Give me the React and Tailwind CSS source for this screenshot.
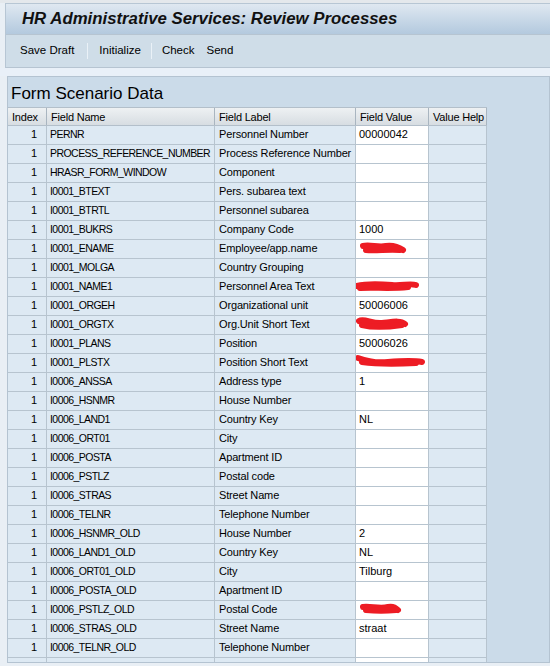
import React from "react";

const rows = [
  ["PERNR", "Personnel Number", "00000042"],
  ["PROCESS_REFERENCE_NUMBER", "Process Reference Number", ""],
  ["HRASR_FORM_WINDOW", "Component", ""],
  ["I0001_BTEXT", "Pers. subarea text", ""],
  ["I0001_BTRTL", "Personnel subarea", ""],
  ["I0001_BUKRS", "Company Code", "1000"],
  ["I0001_ENAME", "Employee/app.name", "", "a"],
  ["I0001_MOLGA", "Country Grouping", ""],
  ["I0001_NAME1", "Personnel Area Text", "", "b"],
  ["I0001_ORGEH", "Organizational unit", "50006006"],
  ["I0001_ORGTX", "Org.Unit Short Text", "", "c"],
  ["I0001_PLANS", "Position", "50006026"],
  ["I0001_PLSTX", "Position Short Text", "", "d"],
  ["I0006_ANSSA", "Address type", "1"],
  ["I0006_HSNMR", "House Number", ""],
  ["I0006_LAND1", "Country Key", "NL"],
  ["I0006_ORT01", "City", ""],
  ["I0006_POSTA", "Apartment ID", ""],
  ["I0006_PSTLZ", "Postal code", ""],
  ["I0006_STRAS", "Street Name", ""],
  ["I0006_TELNR", "Telephone Number", ""],
  ["I0006_HSNMR_OLD", "House Number", "2"],
  ["I0006_LAND1_OLD", "Country Key", "NL"],
  ["I0006_ORT01_OLD", "City", "Tilburg"],
  ["I0006_POSTA_OLD", "Apartment ID", ""],
  ["I0006_PSTLZ_OLD", "Postal Code", "", "e"],
  ["I0006_STRAS_OLD", "Street Name", "straat"],
  ["I0006_TELNR_OLD", "Telephone Number", ""],
  ["", "", ""],
];

// red marker scribbles hiding personal data
const scribbles = {
  a: ["M7 6 C14 4 22 8 30 6 C38 5 44 8 47 10", "M10 10 C20 11 32 9 44 10"],
  b: ["M1 8 C12 5 24 6 36 7 C46 8 54 5 60 7", "M4 10 C18 9 34 11 52 9"],
  c: ["M3 5 C8 2 16 8 26 7 C36 6 44 4 49 8", "M6 9 C18 12 32 11 46 9"],
  d: ["M2 4 C10 7 22 9 32 8 C44 7 56 6 66 8", "M6 8 C20 10 40 10 60 9"],
  e: ["M7 6 C14 5 24 8 32 6 C36 5 40 7 42 9", "M10 9 C20 10 30 10 40 9"],
};

function Scribble({ id }) {
  return (
    <svg className="absolute left-0 top-0" width="72" height="18" viewBox="0 0 72 18">
      {scribbles[id].map((d, i) => (
        <path key={i} d={d} fill="none" stroke="#ed1c24" strokeWidth="6" strokeLinecap="round" strokeLinejoin="round" />
      ))}
    </svg>
  );
}

const cols = "grid grid-cols-[39px_168px_141px_73px_58px] w-[479px]";

export default function App() {
  return (
    <div
      className="w-[550px] h-[666px] overflow-hidden bg-[#e9eff5] text-black"
      style={{ fontFamily: '"Liberation Sans", Arial, sans-serif' }}
    >
      <div className="h-[3px] bg-[#e4e8ec]" />
      <div className="ml-[5px] border-l border-t border-[#b7c6d4]">
        <div className="h-[30px] bg-gradient-to-b from-[#dfe8f1] to-[#b3c9de] pl-[16px] flex items-center">
          <span className="text-[16.8px] font-bold italic text-[#111]">
            HR Administrative Services: Review Processes
          </span>
        </div>
        <div className="h-[34px] bg-[#cfdde8] border-t border-b border-[#b6c4d1] flex items-center pl-[14px] text-[11.5px]">
          <span>Save Draft</span>
          <span className="ml-[13px] mr-[11px] w-px h-[16px] bg-[#aebdcb] border-r border-[#eaf1f7]" />
          <span>Initialize</span>
          <span className="ml-[10px] mr-[10px] w-px h-[16px] bg-[#aebdcb] border-r border-[#eaf1f7]" />
          <span>Check</span>
          <span className="ml-[12px]">Send</span>
        </div>
      </div>
      <div className="h-[8px] bg-[#e9f0f8]" />
      <div className="ml-[7px] h-[587px] border border-[#b4c3d1] bg-[#cbdbe9] overflow-hidden">
        <div className="h-[30px] flex items-center pl-[3px] pt-[3px] text-[17px]">Form Scenario Data</div>
        <div className={`${cols} h-[19px] border-t border-b border-[#b3bfca] bg-gradient-to-b from-[#eef1f3] to-[#d7dde2] text-[11px] tracking-[-0.2px]`}>
          {["Index", "Field Name", "Field Label", "Field Value", "Value Help"].map((h) => (
            <div key={h} className="border-r border-[#a9b5c0] pl-[4px] leading-[18px] whitespace-nowrap overflow-hidden">
              {h}
            </div>
          ))}
        </div>
        {rows.map(([name, label, value, red], i) => (
          <div key={i} className={`${cols} h-[19px] border-b border-[#b7c4cf] text-[11px] leading-[16px]`}>
            <div className="bg-[#dde9f3] border-r border-[#b7c4cf] text-right pr-[9px]">{i < 28 ? "1" : ""}</div>
            <div className="bg-[#dde9f3] border-r border-[#b7c4cf] pl-[3px] whitespace-nowrap text-[10.5px] tracking-[-0.55px]">
              {name}
            </div>
            <div className="bg-[#dde9f3] border-r border-[#b7c4cf] pl-[4px] whitespace-nowrap tracking-[-0.15px]">{label}</div>
            <div className="relative bg-white border-r border-[#b7c4cf] pl-[3px] whitespace-nowrap">
              {value}
              {red && <Scribble id={red} />}
            </div>
            <div className="bg-[#dde9f3] border-r border-[#b7c4cf]" />
          </div>
        ))}
      </div>
    </div>
  );
}
